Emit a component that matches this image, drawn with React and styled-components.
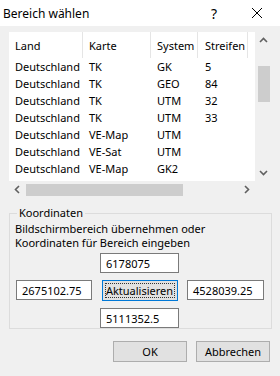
import styled, { createGlobalStyle } from "styled-components";

const Global = createGlobalStyle`
  html, body { margin: 0; padding: 0; background: #f0f0f0; }
  body { font-family: "Noto Sans", "Open Sans", sans-serif; font-size: 11px; color: #000; }
`;

const Dialog = styled.div`
  width: 280px;
  height: 376px;
  background: #f0f0f0;
  display: flex;
  flex-direction: column;
  overflow: hidden;
`;

const TitleBar = styled.div`
  height: 26px;
  background: #fff;
  display: flex;
  align-items: center;
  padding-left: 3px;
`;

const Title = styled.div`
  flex: 1;
  font-size: 12px;
`;

const TitleButton = styled.div`
  width: ${(p) => p.$w || "40px"};
  height: 26px;
  display: flex;
  align-items: center;
  justify-content: center;
  font-size: 14px;
`;

const ListBox = styled.div`
  margin: 6px 8px 0 9px;
  display: grid;
  grid-template-columns: 246px 17px;
  grid-template-rows: 149px 17px;
`;

const ListContent = styled.div`
  background: #fff;
  overflow: hidden;
`;

const Row = styled.div`
  display: grid;
  grid-template-columns: 74px 68px 47px 50px;
  height: ${(p) => (p.$head ? "26px" : "17px")};
  align-items: center;
  white-space: nowrap;
`;

const Cell = styled.div`
  padding-left: ${(p) => (p.$last ? "7px" : "6px")};
  height: 100%;
  display: flex;
  align-items: center;
  border-right: ${(p) => (p.$head ? "1px solid #e5e5e5" : "none")};
  box-sizing: border-box;
  overflow: hidden;
`;

const VScroll = styled.div`
  background: #f0f0f0;
  display: flex;
  flex-direction: column;
  align-items: center;
`;

const HScroll = styled.div`
  background: #f0f0f0;
  display: flex;
  align-items: center;
`;

const Arrow = styled.div`
  width: 17px;
  height: 17px;
  display: flex;
  align-items: center;
  justify-content: center;
  flex-shrink: 0;
`;

const Spacer = styled.div`
  flex: 1;
`;

const VThumb = styled.div`
  width: 12px;
  height: 36px;
  background: #cdcdcd;
  margin-top: 17px;
`;

const HThumb = styled.div`
  width: 157px;
  height: 12px;
  background: #cdcdcd;
`;

const Corner = styled.div`
  background: #f0f0f0;
`;

const Group = styled.fieldset`
  margin: 8px 8px 0 9px;
  padding: 0 6px 6px 6px;
  border: 1px solid #dcdcdc;
  height: 123px;
  box-sizing: border-box;
`;

const Legend = styled.legend`
  padding: 0 2px;
  margin-left: 1px;
  line-height: 14px;
`;

const Hint = styled.div`
  line-height: 14px;
  margin-top: 2px;
  margin-left: -1px;
`;

const CoordGrid = styled.div`
  display: grid;
  grid-template-columns: 76px 79px 77px;
  column-gap: 8px;
  row-gap: 7px;
  margin-top: 3px;
`;

const Field = styled.div`
  grid-column: ${(p) => p.$col};
  height: 20px;
  background: #fff;
  border: 1px solid #7a7a7a;
  box-sizing: border-box;
  padding-left: 5px;
  display: flex;
  align-items: center;
`;

const Button = styled.div`
  grid-column: ${(p) => p.$col || "auto"};
  width: ${(p) => p.$w || "75px"};
  height: 21px;
  justify-self: center;
  background: #e1e1e1;
  border: 1px solid ${(p) => (p.$focus ? "#0078d7" : "#adadad")};
  box-sizing: border-box;
  display: flex;
  align-items: center;
  justify-content: center;
  position: relative;
  &::after {
    content: "";
    display: ${(p) => (p.$focus ? "block" : "none")};
    position: absolute;
    inset: 2px;
    border: 1px dotted #333;
  }
`;

const Footer = styled.div`
  display: flex;
  justify-content: flex-end;
  gap: 9px;
  margin: 12px 10px 0 0;
`;

const rows = [
  ["Deutschland", "TK", "GK", "5"],
  ["Deutschland", "TK", "GEO", "84"],
  ["Deutschland", "TK", "UTM", "32"],
  ["Deutschland", "TK", "UTM", "33"],
  ["Deutschland", "VE-Map", "UTM", ""],
  ["Deutschland", "VE-Sat", "UTM", ""],
  ["Deutschland", "VE-Map", "GK2", ""],
];

function Chevron({ dir }) {
  const pts = {
    up: "1,6 4.5,2.5 8,6",
    down: "1,3 4.5,6.5 8,3",
    left: "6,1 2.5,4.5 6,8",
    right: "3,1 6.5,4.5 3,8",
  }[dir];
  return (
    <svg width="9" height="9" viewBox="0 0 9 9">
      <polyline points={pts} fill="none" stroke="#606060" strokeWidth="1.6" />
    </svg>
  );
}

export default function App() {
  return (
    <Dialog>
      <Global />
      <TitleBar>
        <Title>Bereich wählen</Title>
        <TitleButton>?</TitleButton>
        <TitleButton $w="46px">
          <svg width="10" height="10" viewBox="0 0 10 10">
            <path d="M0 0 L10 10 M10 0 L0 10" stroke="#000" strokeWidth="1" />
          </svg>
        </TitleButton>
      </TitleBar>

      <ListBox>
        <ListContent>
          <Row $head>
            <Cell $head>Land</Cell>
            <Cell $head>Karte</Cell>
            <Cell $head>System</Cell>
            <Cell $head $last>Streifen</Cell>
          </Row>
          {rows.map((r, i) => (
            <Row key={i}>
              {r.map((c, j) => (
                <Cell key={j} $last={j === 3}>{c}</Cell>
              ))}
            </Row>
          ))}
        </ListContent>
        <VScroll>
          <Arrow><Chevron dir="up" /></Arrow>
          <VThumb />
          <Spacer />
          <Arrow><Chevron dir="down" /></Arrow>
        </VScroll>
        <HScroll>
          <Arrow><Chevron dir="left" /></Arrow>
          <HThumb />
          <Spacer />
          <Arrow><Chevron dir="right" /></Arrow>
        </HScroll>
        <Corner />
      </ListBox>

      <Group>
        <Legend>Koordinaten</Legend>
        <Hint>
          Bildschirmbereich übernehmen oder
          <br />
          Koordinaten für Bereich eingeben
        </Hint>
        <CoordGrid>
          <Field $col="2">6178075</Field>
          <Field $col="1">2675102.75</Field>
          <Button $col="2" $w="76px" $focus>Aktualisieren</Button>
          <Field $col="3">4528039.25</Field>
          <Field $col="2">5111352.5</Field>
        </CoordGrid>
      </Group>

      <Footer>
        <Button $w="74px">OK</Button>
        <Button $w="74px">Abbrechen</Button>
      </Footer>
    </Dialog>
  );
}
